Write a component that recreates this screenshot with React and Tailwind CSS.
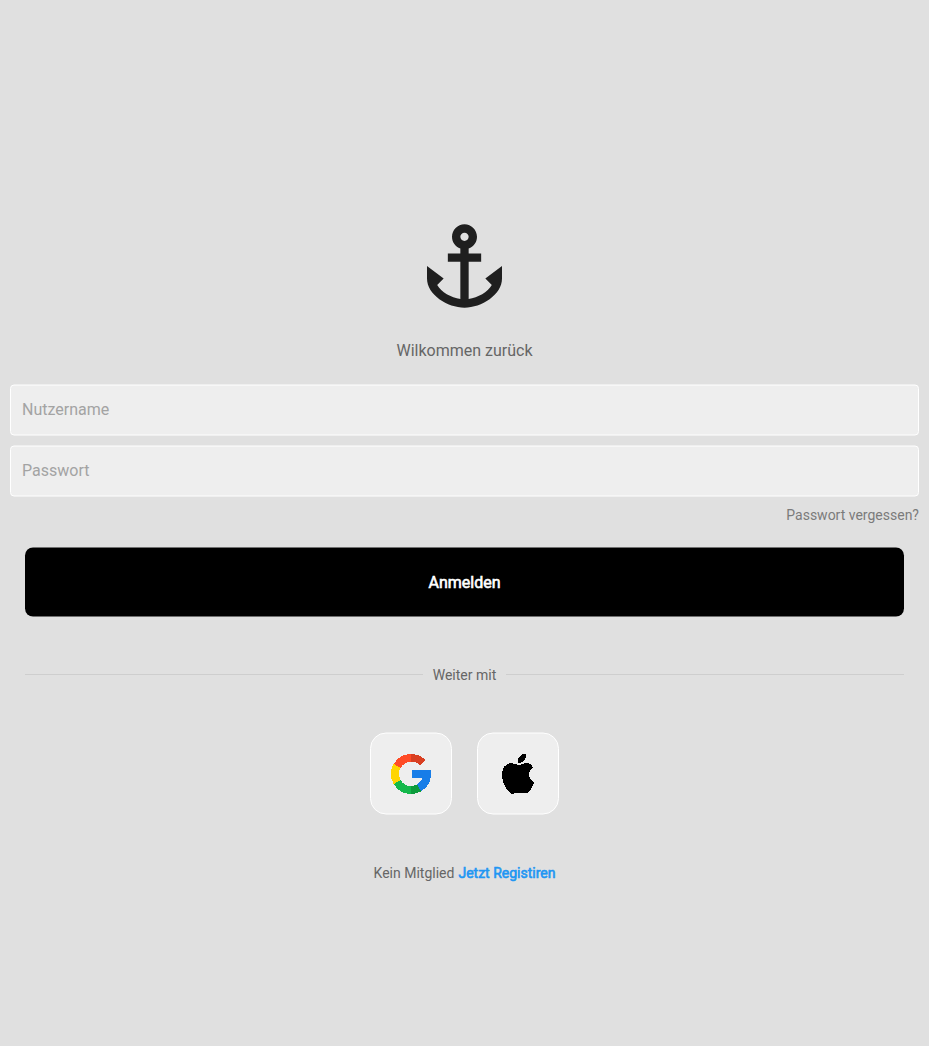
const Field = ({ type, label }) => (
  <div className="relative h-[51px]">
    <div className="absolute inset-0 translate-y-[0.5px] rounded-[4px] border border-white bg-[#eeeeee]" />
    <input
      type={type}
      placeholder={label}
      className="relative block h-full w-full bg-transparent px-[12px] text-[16px] text-[#616161] outline-none placeholder:text-[#a3a3a3]"
    />
  </div>
);

const Tile = ({ label, children }) => (
  <button
    aria-label={label}
    className="flex size-[82px] translate-y-[0.5px] items-center justify-center rounded-[16px] border border-white bg-[#eeeeee]"
  >
    {children}
  </button>
);

const Anchor = () => (
  <svg viewBox="0 0 24 24" className="size-[100px] shrink-0 -translate-x-[0.5px] text-[#1f1f1f]" fill="currentColor">
    <path d="M17,15l1.55,1.55c-0.96,1.69-3.33,3.04-5.55,3.37V11h3V9h-3V7.82C14.16,7.4,15,6.3,15,5c0-1.65-1.35-3-3-3S9,3.35,9,5c0,1.3,0.84,2.4,2,2.82V9H8v2h3v8.92c-2.22-0.33-4.59-1.68-5.55-3.37L7,15l-4-3v3c0,3.88,4.92,7,9,7s9-3.12,9-7v-3L17,15z M12,4c0.55,0,1,0.45,1,1s-0.45,1-1,1s-1-0.45-1-1S11.45,4,12,4z" />
  </svg>
);

const Google = () => (
  <svg viewBox="0 0 40 40" className="size-[40px] translate-y-[0.5px]" shapeRendering="crispEdges">
    <path fill="#ff4b26" d="M20 0A20 20 0 0 0 2.7 10L9.6 14A12 12 0 0 1 20 8Z" />
    <path fill="#d93f21" d="M20 0A20 20 0 0 1 34.2 5.9L29 11A12 12 0 0 0 20 8Z" />
    <path fill="#ffd500" d="M2.7 10A20 20 0 0 0 2.7 30L9.6 26A12 12 0 0 1 9.6 14Z" />
    <path fill="#14b84b" d="M2.7 30A20 20 0 0 0 20 40V32A12 12 0 0 1 9.6 26Z" />
    <path fill="#0d9b3c" d="M20 40A20 20 0 0 0 30 37.3L26 30.4A12 12 0 0 1 20 32Z" />
    <path fill="#177de8" d="M21 16.2H40V20A20 20 0 0 1 30 37.3L26 30.4A12 12 0 0 0 31.3 24.2H21Z" />
  </svg>
);

const Apple = () => (
  <svg viewBox="0 0 32 40" className="h-[40px] w-[32px] translate-y-[0.5px]" shapeRendering="crispEdges">
    <path d="M24 0L24 3.4C23 6 21 8.2 18.6 8.8L16 8.8V5.4C17 2.6 19.8 .3 22 0Z" />
    <path d="M30.8 13.3C25.6 16.6 25.6 25.4 32 28.2C31.2 32 28.8 36.4 26 38.8C23.8 40.4 21.2 38.6 17.3 38.6C13.5 38.6 11.6 40.6 8.9 39.5C4.5 36.5 0 29 0 20.5C0 13.2 4.4 9.2 9.2 9.2C12.3 9.2 14.6 11.1 16.6 11.1C18.5 11.1 20.6 9.1 24.6 9.1C27.6 9.1 30.4 10.6 30.8 13.3Z" />
  </svg>
);

export default function App() {
  return (
    <main className="flex min-h-[1046px] flex-col items-center bg-[#e0e0e0] pt-[216px] font-[Roboto,sans-serif] text-[14px] leading-[16px] text-[#666666]">
      <Anchor />
      <h1 className="mt-[25px] text-[16px] leading-[19px]">Wilkommen zurück</h1>
      <form className="mt-[24px] flex w-full flex-col px-[10px]">
        <div className="flex flex-col gap-[10px]">
          <Field type="text" label="Nutzername" />
          <Field type="password" label="Passwort" />
        </div>
        <a className="mt-[11px] self-end text-[#7b7b7b]">Passwort vergessen?</a>
        <button
          type="button"
          className="relative mx-[15px] mt-[24px] h-[69px] text-[16px] text-white"
        >
          <span className="absolute inset-0 translate-y-[0.5px] rounded-[8px] bg-black" />
          <span className="relative block pt-[2px] [-webkit-text-stroke:0.6px_white]">Anmelden</span>
        </button>
      </form>
      <div className="mt-[51px] flex w-full items-center gap-[10px] px-[25px]">
        <span className="mb-[2px] h-px flex-1 bg-[#cecece]" />
        <span>Weiter mit</span>
        <span className="mb-[2px] h-px flex-1 bg-[#cecece]" />
      </div>
      <div className="mt-[49px] flex gap-[25px]">
        <Tile label="Google"><Google /></Tile>
        <Tile label="Apple"><Apple /></Tile>
      </div>
      <p className="mt-[51px] flex gap-[4px]">
        <span>Kein Mitglied</span>
        <a className="text-[#2196f3] [-webkit-text-stroke:0.6px_#2196f3]">Jetzt Registiren</a>
      </p>
    </main>
  );
}
